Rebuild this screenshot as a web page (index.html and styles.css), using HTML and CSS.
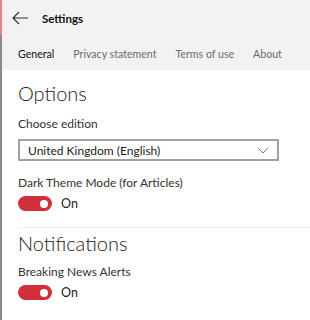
FILE: index.html
```html
<!DOCTYPE html>
<html lang="en">
<head>
    <meta charset="UTF-8">
    <meta name="viewport" content="width=device-width, initial-scale=1.0">
    <title>Settings</title>
    <link rel="stylesheet" href="styles.css">
</head>
<body>
    <div class="window">
        <div class="header">
            <div class="title-bar">
                <svg class="back" width="18" height="14" viewBox="0 0 18 14">
                    <path d="M17 7H2M8 1L2 7l6 6" fill="none" stroke="#333" stroke-width="1.2"/>
                </svg>
                <span class="title">Settings</span>
            </div>
            <div class="tabs">
                <span class="tab active">General</span>
                <span class="tab">Privacy statement</span>
                <span class="tab">Terms of use</span>
                <span class="tab">About</span>
            </div>
        </div>

        <div class="content">
            <section class="group">
                <h2>Options</h2>
                <div class="label">Choose edition</div>
                <div class="select">
                    <span>United Kingdom (English)</span>
                    <svg width="12" height="7" viewBox="0 0 12 7">
                        <path d="M1 1l5 5 5-5" fill="none" stroke="#777" stroke-width="1"/>
                    </svg>
                </div>
                <div class="label">Dark Theme Mode (for Articles)</div>
                <div class="toggle-row">
                    <span class="toggle"><span class="knob"></span></span>
                    <span>On</span>
                </div>
            </section>

            <section class="group">
                <h2>Notifications</h2>
                <div class="label">Breaking News Alerts</div>
                <div class="toggle-row">
                    <span class="toggle"><span class="knob"></span></span>
                    <span>On</span>
                </div>
            </section>
        </div>
    </div>
</body>
</html>
```

FILE: styles.css
```css
* {
    margin: 0;
    padding: 0;
    box-sizing: border-box;
}

body {
    font-family: Lato, 'Open Sans', sans-serif;
    color: #222;
    background: #fff;
    width: 310px;
    height: 320px;
    overflow: hidden;
}

.window {
    height: 320px;
    border-left: 2px solid #8a8a8a;
}

.header {
    background: #f2f2f2;
    height: 70px;
    position: relative;
}

.header::before {
    content: '';
    position: absolute;
    left: -2px;
    top: 0;
    width: 2px;
    height: 35px;
    background: #e8838a;
}

.title-bar {
    display: flex;
    align-items: center;
    height: 36px;
    padding-left: 9px;
}

.back {
    display: block;
}

.title {
    margin-left: 13px;
    font-size: 11.5px;
    font-weight: 700;
    color: #111;
}

.tabs {
    display: flex;
    gap: 19px;
    padding: 12px 0 0 16px;
    font-size: 10.6px;
    white-space: nowrap;
}

.tab {
    color: #6b6b6b;
}

.tab.active {
    color: #111;
}

.content {
    padding: 0 0 0 16px;
}

.group {
    padding-top: 10px;
    padding-bottom: 16px;
}

.group + .group {
    border-top: 1px solid #f0f0f0;
    padding-top: 2px;
}

h2 {
    font-size: 20px;
    font-weight: 300;
    color: #222;
    line-height: 26px;
}

.label {
    font-size: 12px;
    color: #333;
    margin-top: 7px;
    line-height: 18px;
}

.group:first-child h2 + .label {
    margin-top: 9px;
}

.select {
    display: flex;
    align-items: center;
    justify-content: space-between;
    width: 261px;
    height: 22px;
    margin-top: 6px;
    margin-bottom: 13px;
    border: 2px solid #a0a0a0;
    padding: 0 8px 0 8px;
    font-size: 12px;
    color: #222;
}

.toggle-row {
    display: flex;
    align-items: center;
    gap: 9px;
    margin-top: 4px;
    font-size: 12.5px;
}

.toggle {
    display: flex;
    justify-content: flex-end;
    align-items: center;
    width: 34px;
    height: 15px;
    border-radius: 8px;
    background: #d1303a;
    padding-right: 4px;
}

.knob {
    width: 8px;
    height: 8px;
    border-radius: 50%;
    background: #fff;
}
```
